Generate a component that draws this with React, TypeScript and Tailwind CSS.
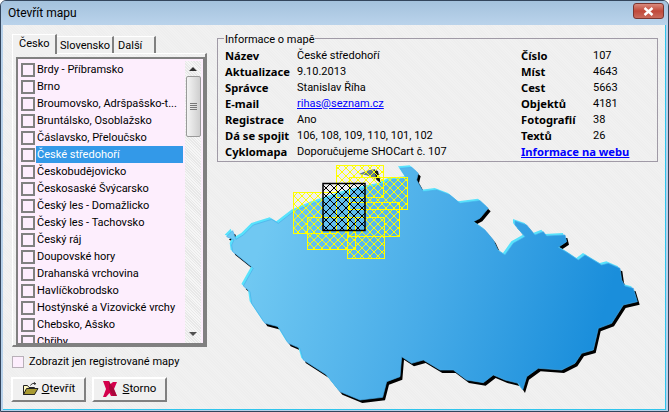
const font = "font-['Roboto',Tahoma,sans-serif]";
const boldFont = "font-['Noto_Sans',Tahoma,sans-serif] font-bold text-[11.2px]";

const regions = [
  "Brdy - Příbramsko",
  "Brno",
  "Broumovsko, Adršpašsko-t...",
  "Bruntálsko, Osoblažsko",
  "Čáslavsko, Přeloučsko",
  "České středohoří",
  "Českobudějovicko",
  "Českosaské Švýcarsko",
  "Český les - Domažlicko",
  "Český les - Tachovsko",
  "Český ráj",
  "Doupovské hory",
  "Drahanská vrchovina",
  "Havlíčkobrodsko",
  "Hostýnské a Vizovické vrchy",
  "Chebsko, Ašsko",
  "Chřiby",
];

const mapPath =
  "M50 230L68 212L78 238L100 225L130 195L185 178L205 190L250 155L310 130L400 100L460 85L510 75L540 60L590 55L570 25L605 22L625 40L620 60L640 95L680 90L720 105L750 130L810 122L835 145L810 175L790 185L825 210L850 240L865 272L885 285L910 250L945 230L915 195L915 183L950 195L975 225L1000 215L1010 228L1065 225L1070 245L1045 262L1075 280L1105 300L1125 285L1175 315L1195 310L1230 325L1235 360L1245 378L1270 385L1282 425L1240 435L1205 490L1165 505L1150 570L1115 580L1095 610L1055 630L985 625L950 650L938 690L925 670L885 660L850 645L820 668L770 660L730 630L690 630L640 600L605 610L575 590L570 650L530 665L518 712L450 720L390 695L350 645L280 600L270 565L235 550L205 500L165 490L125 430L120 395L100 378L130 325L68 275L65 255L72 240Z";

const yellowRects = [
  [83, 32, 43, 41],
  [126, 5, 47, 32],
  [139, 17, 58, 32],
  [138, 42, 51, 34],
  [97, 57, 48, 32],
  [137, 57, 37, 41],
];

function CzechMap() {
  return (
    <svg viewBox="0 0 459 248" className="block w-[459px] h-[248px] -ml-[7px] -mt-[2px]">
      <defs>
        <linearGradient id="fill" gradientUnits="userSpaceOnUse" x1="150" y1="250" x2="1150" y2="560">
          <stop offset="0" stopColor="#70c8f2" />
          <stop offset="0.5" stopColor="#48ace8" />
          <stop offset="1" stopColor="#1a8edb" />
        </linearGradient>
        <filter id="soft" x="-5%" y="-5%" width="110%" height="110%">
          <feGaussianBlur stdDeviation="1.6" />
        </filter>
        <pattern id="hatchY" width="8" height="8" patternUnits="userSpaceOnUse">
          <path d="M0 0L8 8M8 0L0 8" stroke="#ffff00" strokeWidth="1" fill="none" />
        </pattern>
        <pattern id="hatchK" width="8" height="8" patternUnits="userSpaceOnUse">
          <path d="M0 0L8 8M8 0L0 8" stroke="#000" strokeWidth="1" fill="none" />
        </pattern>
      </defs>
      <g transform="scale(0.33333)">
        <path d={mapPath} transform="translate(7 9)" fill="#000" filter="url(#soft)" />
        <path d={mapPath} transform="translate(-6 -6)" fill="#58e2fc" filter="url(#soft)" />
        <path d={mapPath} fill="url(#fill)" stroke="#48ace8" strokeWidth="2" strokeLinejoin="round" />
        <path d="M446 42L470 32L490 28L503 34L512 70L498 58L470 46Z" fill="#5f7d8c" filter="url(#soft)" />
        <path d="M492 28L504 34L512 68L500 60Z" fill="#10161a" filter="url(#soft)" />
      </g>
      {yellowRects.map(([x, y, w, h]) => (
        <g key={`${x}-${y}`}>
          <rect x={x + 0.5} y={y + 0.5} width={w} height={h} fill="url(#hatchY)" stroke="#ffff00" strokeWidth="1" />
        </g>
      ))}
      <rect x="113" y="23.5" width="42" height="47" fill="url(#hatchK)" stroke="#000" strokeWidth="1.5" />
    </svg>
  );
}

function FolderIcon() {
  return (
    <svg width="17" height="14" viewBox="0 0 17 14">
      <path d="M1.5 3.5V12.5H12.5V5.5H7L5.5 3.5Z" fill="#fff8c0" stroke="#222" />
      <path d="M1.5 12.5L4.5 6.5H16L12.5 12.5Z" fill="#a89a32" stroke="#222" />
      <path d="M8.5 3.5C9.5 1.5 11.5 1 13.5 1.5M13.5 1.5L12 .5M13.5 1.5L12.5 3" fill="none" stroke="#222" />
    </svg>
  );
}

function CrossIcon() {
  return (
    <svg width="14" height="17" viewBox="0 0 14 17">
      <path d="M0 0H6L7.5 3L10 1H14L11 8L14 15H8L6.5 12L3 16H0L3 8Z" fill="#d4004c" />
      <path d="M6 0L7.5 3L11 8L14 15H10L6 8Z" fill="#8c0a30" opacity="0.6" />
    </svg>
  );
}

function ListRow({ label, selected }: { label: string; selected: boolean }) {
  return (
    <div className="flex items-center h-[17px] shrink-0">
      <div className="w-[14px] h-[14px] ml-[3px] border-2 border-[#808080] shrink-0" />
      <div
        className={
          selected
            ? "ml-px w-[147px] h-[17px] bg-[#3399e8] text-white pl-px leading-[17px] whitespace-nowrap"
            : "ml-px pl-px leading-[17px] whitespace-nowrap text-black"
        }
      >
        {label}
      </div>
    </div>
  );
}

function Scrollbar() {
  return (
    <div className="w-[16px] h-full bg-[repeating-linear-gradient(45deg,#f6f6f6_0px,#f6f6f6_1px,#e8e8e8_1px,#e8e8e8_2px)] flex flex-col items-center shrink-0">
      <div className="h-[15px] w-full flex items-center justify-center">
        <div className="w-0 h-0 border-x-[4px] border-x-transparent border-b-[4px] border-b-[#303030]" />
      </div>
      <div className="w-[15px] h-[61px] border border-[#9a9a9a] rounded-[2px] bg-gradient-to-r from-[#f4f4f4] to-[#cfcfcf] flex flex-col items-center justify-center gap-px">
        <div className="w-[7px] h-px bg-[#777]" />
        <div className="w-[7px] h-px bg-[#777]" />
        <div className="w-[7px] h-px bg-[#777]" />
        <div className="w-[7px] h-px bg-[#777]" />
      </div>
      <div className="mt-auto h-[14px] w-full flex items-start justify-center">
        <div className="w-0 h-0 mt-[3px] border-x-[4px] border-x-transparent border-t-[4px] border-t-[#505050]" />
      </div>
    </div>
  );
}

function Tabs() {
  return (
    <div className="w-[195px] flex flex-col">
      <div className="flex items-end h-[19px] text-[11px]">
        <div className="w-[45px] h-[20px] bg-[#f0f0f0] border-t border-l border-white border-r-2 border-r-[#808080] pl-[6px] leading-[18px] relative z-10 -mb-px text-black">
          Česko
        </div>
        <div className="w-[57px] h-[17px] bg-[#f0f0f0] border-t border-white border-r-2 border-r-[#808080] pl-[3px] leading-[17px] text-black">
          Slovensko
        </div>
        <div className="w-[42px] h-[17px] bg-[#f0f0f0] border-t border-white border-r-2 border-r-[#808080] pl-[4px] leading-[17px] text-black">
          Další
        </div>
      </div>
      <div className="h-[294px] border-t border-l border-white border-r-2 border-b-2 border-r-[#808080] border-b-[#808080] p-[3px] pr-0 pb-0">
        <div className="h-[289px] border-2 border-b-[3px] border-[#808080] bg-[#fdeefd] flex overflow-hidden pt-[2px] pr-[2px] text-[11px]">
          <div className="flex-1 flex flex-col overflow-hidden">
            {regions.map((r) => (
              <ListRow key={r} label={r} selected={r === "České středohoří"} />
            ))}
          </div>
          <Scrollbar />
        </div>
      </div>
    </div>
  );
}

function DialogButton({ icon, underlined, rest, gap }: { icon: React.ReactNode; underlined: string; rest: string; gap: string }) {
  return (
    <div className="w-[75px] h-[25px] bg-[#f0f0f0] border-t-2 border-l-2 border-white border-r-2 border-b-2 border-r-[#808080] border-b-[#808080] flex items-center justify-center text-[11.5px] text-black">
      {icon}
      <span className={gap}>
        <span className="underline">{underlined}</span>
        {rest}
      </span>
    </div>
  );
}

const infoLeft: [string, React.ReactNode][] = [
  ["Název", "České středohoří"],
  ["Aktualizace", "9.10.2013"],
  ["Správce", "Stanislav Říha"],
  ["E-mail", <a className="text-[#0000ff] underline">rihas@seznam.cz</a>],
  ["Registrace", "Ano"],
  ["Dá se spojit", "106, 108, 109, 110, 101, 102"],
  ["Cyklomapa", "Doporučujeme SHOCart č. 107"],
];

const infoRight: [string, string][] = [
  ["Číslo", "107"],
  ["Míst", "4643"],
  ["Cest", "5663"],
  ["Objektů", "4181"],
  ["Fotografií", "38"],
  ["Textů", "26"],
];

function InfoBox() {
  return (
    <div className="relative w-[441px] h-[124px] border border-[#a09aa6] mt-[4px] pl-[7px] pt-[9px] text-[11px] text-black">
      <div className="absolute left-[6px] -top-[6px] bg-[#f0f0f0] px-px leading-[14px] text-[11px]">Informace o mapě</div>
      <div className="flex">
        <div className="w-[296px] flex flex-col">
          {infoLeft.map(([k, v]) => (
            <div key={k} className="flex h-[16px] items-center whitespace-nowrap">
              <div className={`w-[72px] ${boldFont}`}>{k}</div>
              <div>{v}</div>
            </div>
          ))}
        </div>
        <div className="flex flex-col">
          {infoRight.map(([k, v]) => (
            <div key={k} className="flex h-[16px] items-center whitespace-nowrap">
              <div className={`w-[72px] ${boldFont}`}>{k}</div>
              <div>{v}</div>
            </div>
          ))}
          <div className={`h-[16px] flex items-center whitespace-nowrap ${boldFont} text-[#0000ff] underline`}>
            Informace na webu
          </div>
        </div>
      </div>
    </div>
  );
}

export default function App() {
  return (
    <div className={`${font} w-[669px] h-[412px] overflow-hidden bg-[#b7d1ea] border border-[#33455c] rounded-t-[6px] flex flex-col`}>
      <div className="h-[24px] shrink-0 flex items-center pl-[7px] pr-[4px] bg-gradient-to-b from-[#a4c2dd] to-[#bad3eb]">
        <div className="text-[12px] text-black">Otevřít mapu</div>
        <div className="ml-auto -mt-[4px] w-[31px] h-[16px] rounded-[3px] border border-[#7a3530] bg-gradient-to-b from-[#d98a7e] via-[#c0483a] to-[#c96a5c] flex items-center justify-center">
          <svg width="11" height="9" viewBox="0 0 11 9">
            <path d="M1.5 1L9.5 8M9.5 1L1.5 8" stroke="#fff" strokeWidth="2.4" />
          </svg>
        </div>
      </div>
      <div className="ml-[2px] mr-[2px] mb-[1px] flex-1 border-r border-b border-[#2fc4ec] overflow-hidden bg-[#f0f0f0] bg-[repeating-linear-gradient(45deg,#f1f1f1_0px,#f1f1f1_1px,#eeeeee_1px,#eeeeee_2px)] flex">
        <div className="pl-[9px] pt-[9px] w-[214px] shrink-0 flex flex-col">
          <Tabs />
          <div className="flex items-center mt-[7px] text-[11px] text-black">
            <div className="w-[12px] h-[12px] border border-[#b8b0b8] bg-[#fdeefd]" />
            <div className="ml-[5px]">Zobrazit jen registrované mapy</div>
          </div>
          <div className="flex gap-[6px] mt-[6px] -ml-px">
            <DialogButton icon={<FolderIcon />} underlined="O" rest="tevřít" gap="ml-[3px]" />
            <DialogButton icon={<CrossIcon />} underlined="S" rest="torno" gap="ml-[6px]" />
          </div>
        </div>
        <div className="pt-[9px] flex flex-col">
          <InfoBox />
          <CzechMap />
        </div>
      </div>
    </div>
  );
}
